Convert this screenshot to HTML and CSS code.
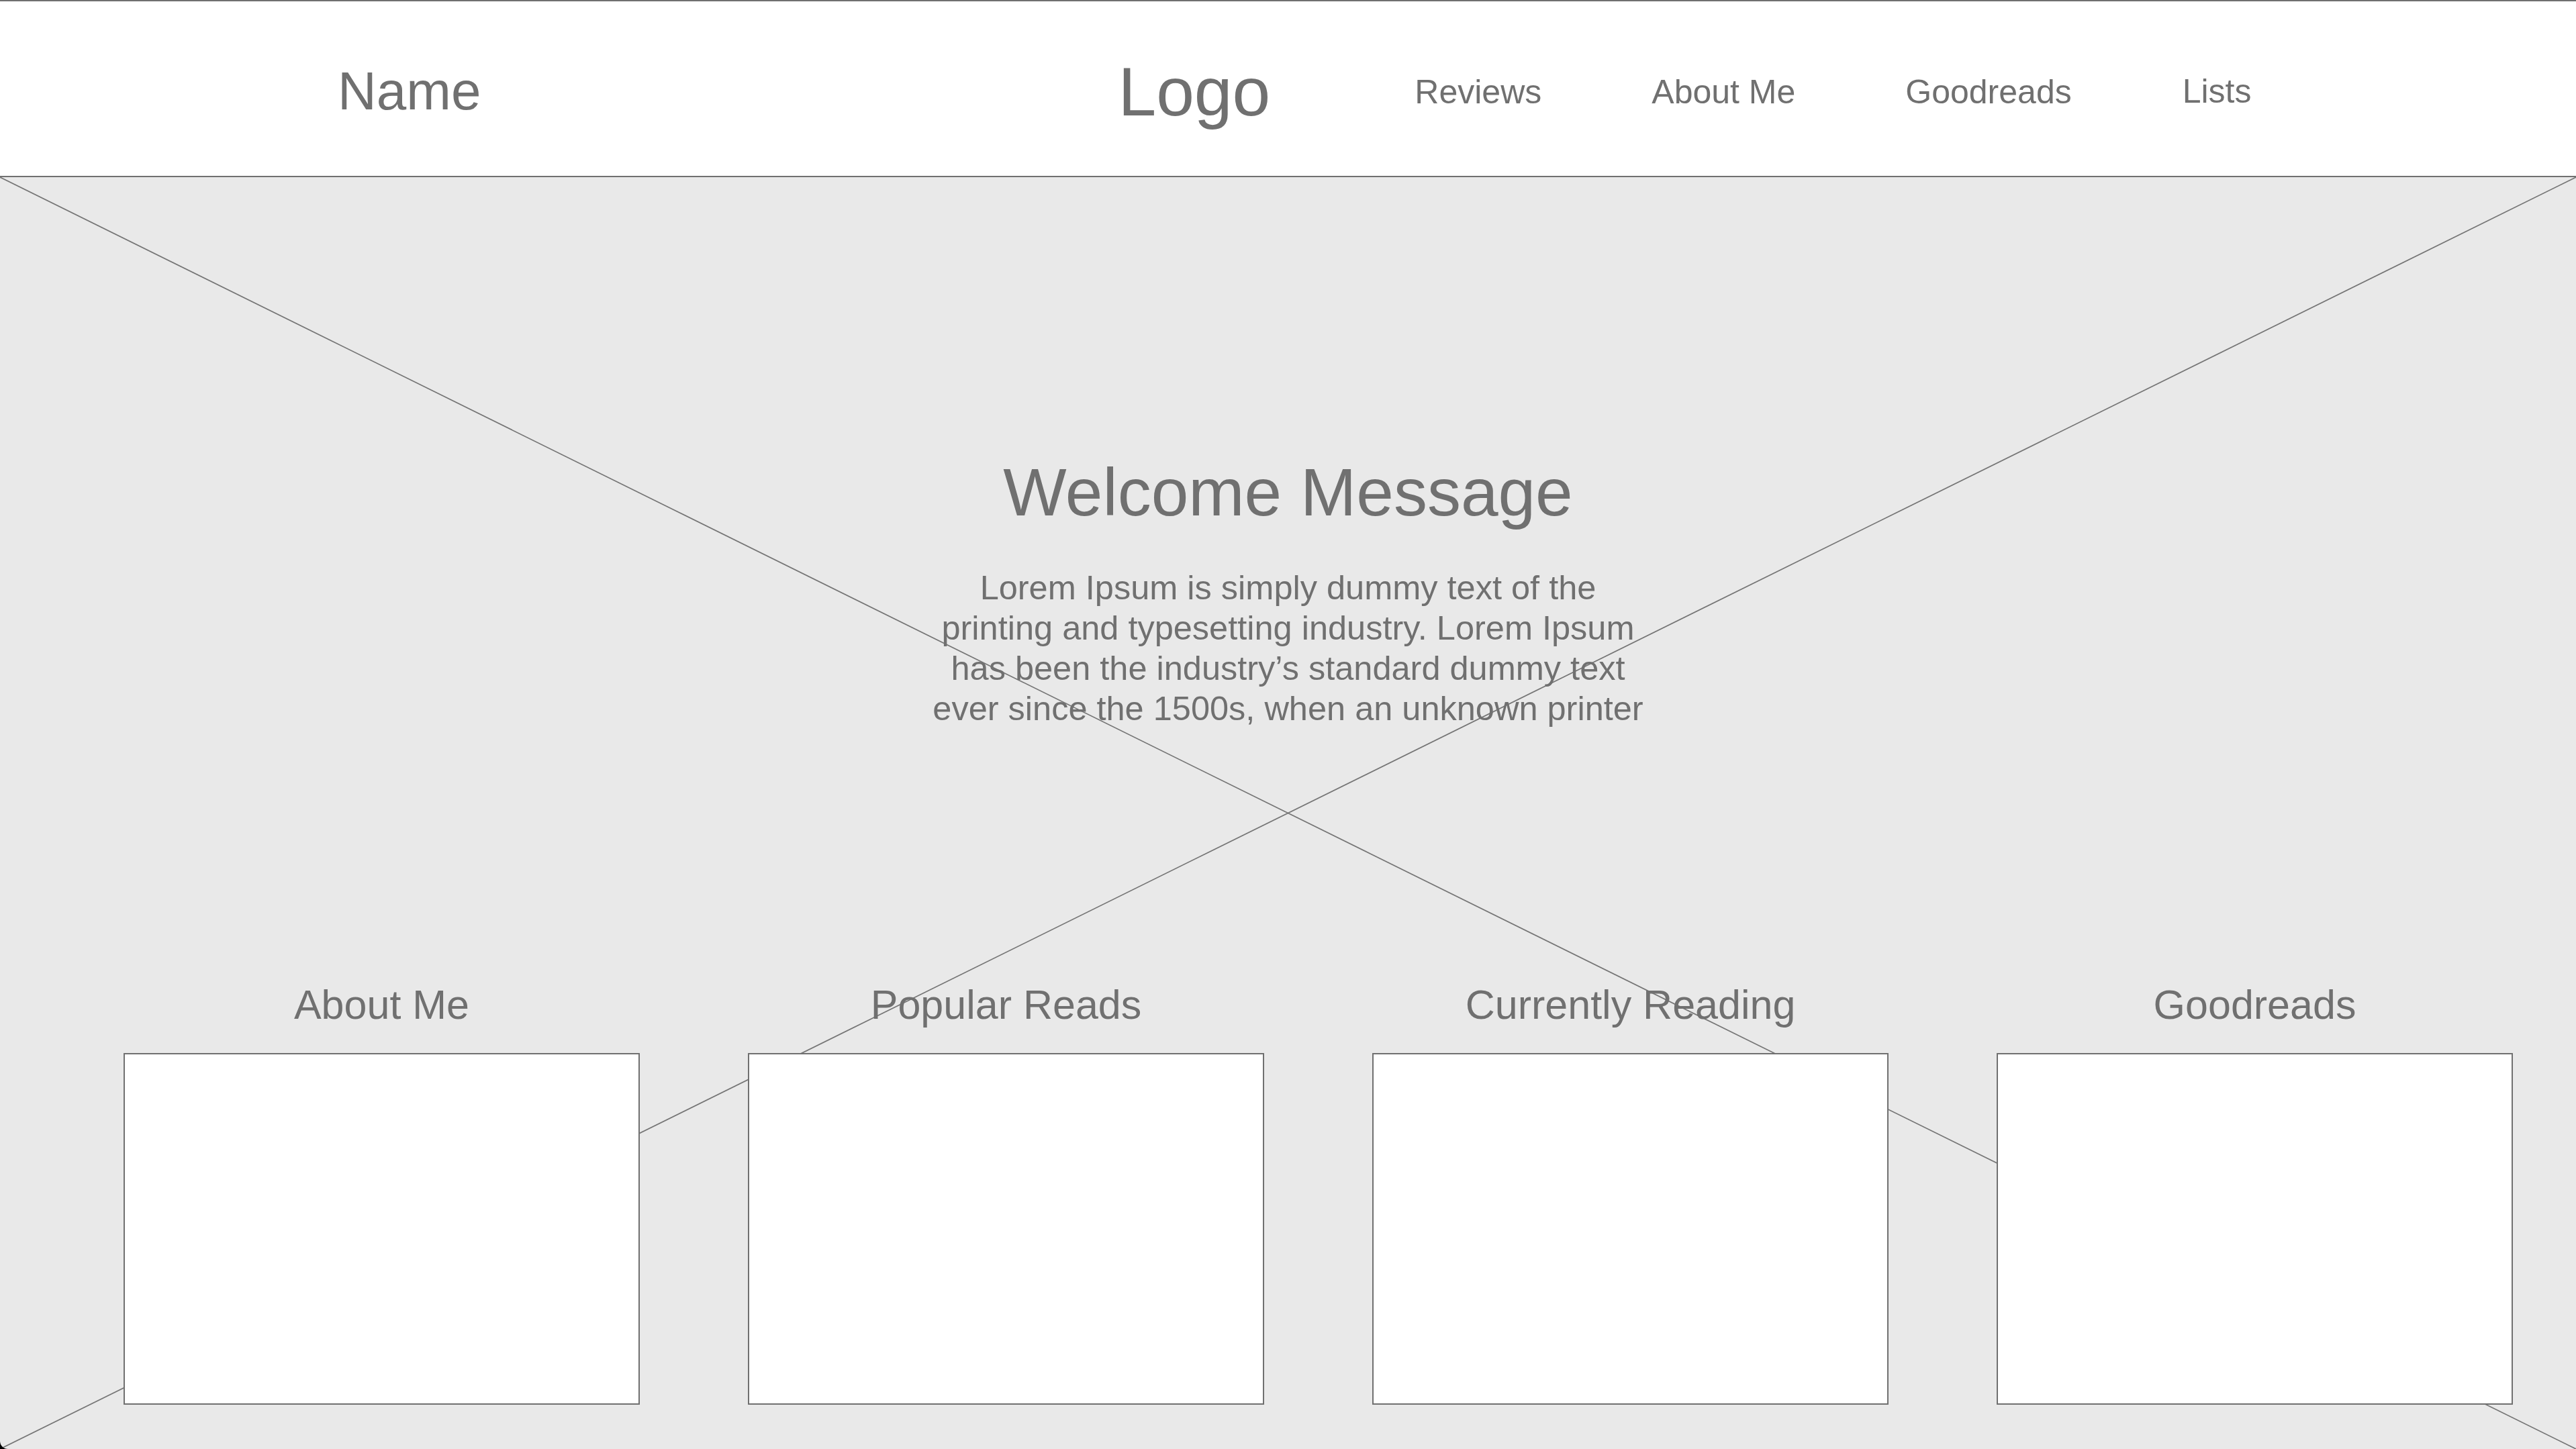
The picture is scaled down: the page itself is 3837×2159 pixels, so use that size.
FILE: index.html
```html
<!DOCTYPE html>
<html lang="en">
<head>
<meta charset="utf-8">
<title>Wireframe</title>
<link rel="stylesheet" href="styles.css">
</head>
<body>
<div class="page">
  <header class="topbar">
    <div class="name">Name</div>
    <div class="logo">Logo</div>
    <nav class="nav">
      <a class="nav-link">Reviews</a>
      <a class="nav-link">About Me</a>
      <a class="nav-link">Goodreads</a>
      <a class="nav-link lists">Lists</a>
    </nav>
  </header>
  <main class="hero">
    <svg class="xlines" viewBox="0 0 3837 1895" preserveAspectRatio="none" aria-hidden="true">
      <line x1="0" y1="0" x2="3837" y2="1895"/>
      <line x1="3837" y1="0" x2="0" y2="1895"/>
    </svg>
    <div class="hero-content">
      <h1 class="welcome">Welcome Message</h1>
      <p class="intro">Lorem Ipsum is simply dummy text of the<br>printing and typesetting industry. Lorem Ipsum<br>has been the industry’s standard dummy text<br>ever since the 1500s, when an unknown printer</p>
      <div class="cards">
        <section class="col">
          <h2 class="col-title">About Me</h2>
          <div class="card"></div>
        </section>
        <section class="col">
          <h2 class="col-title">Popular Reads</h2>
          <div class="card"></div>
        </section>
        <section class="col">
          <h2 class="col-title">Currently Reading</h2>
          <div class="card"></div>
        </section>
        <section class="col">
          <h2 class="col-title">Goodreads</h2>
          <div class="card"></div>
        </section>
      </div>
    </div>
  </main>
</div>
</body>
</html>
```
FILE: styles.css
```css
html {
  background: #000;
}
body {
  margin: 0;
  font-family: "Liberation Sans", Arial, Helvetica, sans-serif;
  color: #707070;
}
.page {
  width: 3837px;
  height: 2159px;
  display: flex;
  flex-direction: column;
  overflow: hidden;
  background: #e9e9e9;
  border-bottom-left-radius: 12px;
}
.topbar {
  box-sizing: border-box;
  height: 264px;
  flex: none;
  background: #fff;
  border-top: 2px solid #707070;
  border-bottom: 2px solid #707070;
  display: flex;
  align-items: flex-start;
  padding-left: 503px;
}
.name {
  font-size: 80px;
  line-height: 1;
  margin-top: 94px;
}
.logo {
  font-size: 102px;
  line-height: 1;
  margin-top: 84px;
  margin-left: 949px;
}
.nav {
  display: flex;
  gap: 164px;
  margin-left: 215px;
  margin-top: 110px;
}
.nav-link {
  font-size: 50px;
  line-height: 1;
  color: #707070;
}
.nav-link.lists {
  margin-top: -1px;
  margin-left: 1px;
}
.hero {
  flex: 1;
  position: relative;
}
.xlines {
  position: absolute;
  left: 0;
  top: 0;
  width: 100%;
  height: 100%;
}
.xlines line {
  stroke: #757575;
  stroke-width: 1.7;
  vector-effect: non-scaling-stroke;
}
.hero-content {
  position: relative;
  display: flex;
  flex-direction: column;
  align-items: center;
  padding-top: 419px;
}
.welcome {
  margin: 0;
  font-size: 100px;
  font-weight: normal;
  line-height: 1;
}
.intro {
  margin: 63px 0 0;
  font-size: 50.5px;
  line-height: 60px;
  text-align: center;
  white-space: nowrap;
}
.cards {
  align-self: stretch;
  display: flex;
  gap: 161px;
  padding-left: 184px;
  margin-top: 380px;
}
.col {
  width: 769px;
  display: flex;
  flex-direction: column;
  align-items: center;
}
.col-title {
  margin: 0;
  font-size: 61px;
  font-weight: normal;
  line-height: 1;
  padding-top: 1px;
}
.card {
  box-sizing: border-box;
  width: 769px;
  height: 524px;
  margin-top: 41px;
  background: #fff;
  border: 2px solid #707070;
}
```
